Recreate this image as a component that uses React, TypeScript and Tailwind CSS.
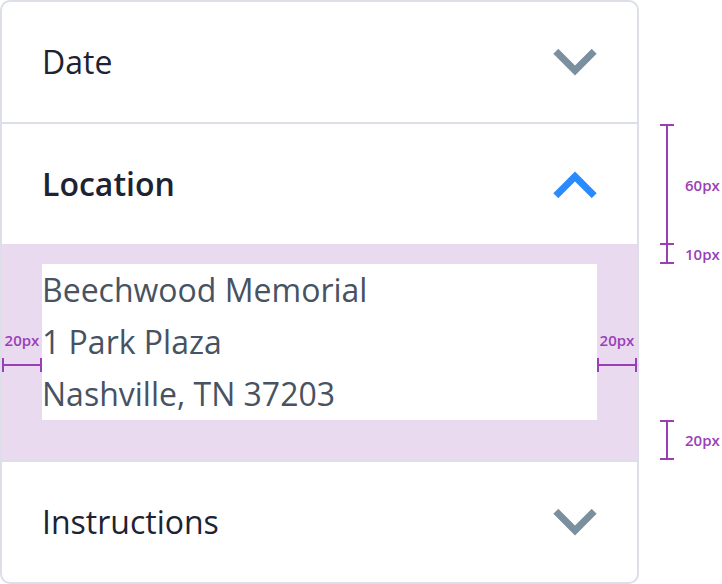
import React from "react";

const Chevron = ({ up }: { up?: boolean }) => (
  <svg width="44" height="27" viewBox="0 0 44 27" fill="none" className={up ? "stroke-[#2a8bff]" : "stroke-[#7b909e]"}>
    <polyline
      points={up ? "2.8,24.7 22,5.5 41.2,24.7" : "2.8,2.3 22,21.5 41.2,2.3"}
      strokeWidth="7"
      strokeLinecap="butt"
      strokeLinejoin="miter"
    />
  </svg>
);

const Header = ({ title, open }: { title: string; open?: boolean }) => (
  <div className="h-[120px] flex items-center justify-between px-10">
    <span className={`text-[32px] leading-[52px] text-[#1d2333] ${open ? "font-semibold" : "font-normal"}`}>
      {title}
    </span>
    <Chevron up={open} />
  </div>
);

// measurement marks (redline annotations)
const VMark = ({ h }: { h: string }) => (
  <div className={`w-[14px] ${h} flex flex-col items-center`}>
    <div className="w-[14px] h-[2px] bg-[#9a3fb8]" />
    <div className="w-[2px] flex-1 bg-[#9a3fb8]" />
    <div className="w-[14px] h-[2px] bg-[#9a3fb8]" />
  </div>
);

const HMark = () => (
  <div className="w-[40px] h-[14px] flex items-center">
    <div className="w-[2px] h-[14px] bg-[#9a3fb8]" />
    <div className="h-[2px] flex-1 bg-[#9a3fb8]" />
    <div className="w-[2px] h-[14px] bg-[#9a3fb8]" />
  </div>
);

const Label = ({ children }: { children: React.ReactNode }) => (
  <span className="text-[15px] leading-[20px] font-semibold text-[#9a3fb8]">{children}</span>
);

const SideMark = () => (
  <div className="w-10 flex flex-col items-center pt-[66px] gap-2">
    <Label>20px</Label>
    <HMark />
  </div>
);

export default function App() {
  return (
    <div className="w-[722px] h-[584px] bg-white flex font-['Open_Sans',sans-serif]">
      <div className="w-[639px] h-fit border-2 border-[#dcdfe8] rounded-[10px] overflow-hidden">
        <Header title="Date" />
        <div className="border-t-2 border-[#dcdfe8]">
          <Header title="Location" open />
          <div className="bg-[#e9daf0] pt-5 pb-10 flex">
            <SideMark />
            <div className="flex-1 bg-white text-[32px] leading-[52px] text-[#475262]">
              <div>Beechwood Memorial</div>
              <div>1 Park Plaza</div>
              <div>Nashville, TN 37203</div>
            </div>
            <SideMark />
          </div>
        </div>
        <div className="border-t-2 border-[#dcdfe8]">
          <Header title="Instructions" />
        </div>
      </div>

      <div className="flex flex-col pt-[124px] pl-[21px]">
        <div className="flex items-center gap-[11px]">
          <VMark h="h-[121px]" />
          <Label>60px</Label>
        </div>
        <div className="flex items-center gap-[11px] -mt-[2px]">
          <VMark h="h-[21px]" />
          <Label>10px</Label>
        </div>
        <div className="flex items-center gap-[11px] mt-[156px]">
          <VMark h="h-[40px]" />
          <Label>20px</Label>
        </div>
      </div>
    </div>
  );
}
